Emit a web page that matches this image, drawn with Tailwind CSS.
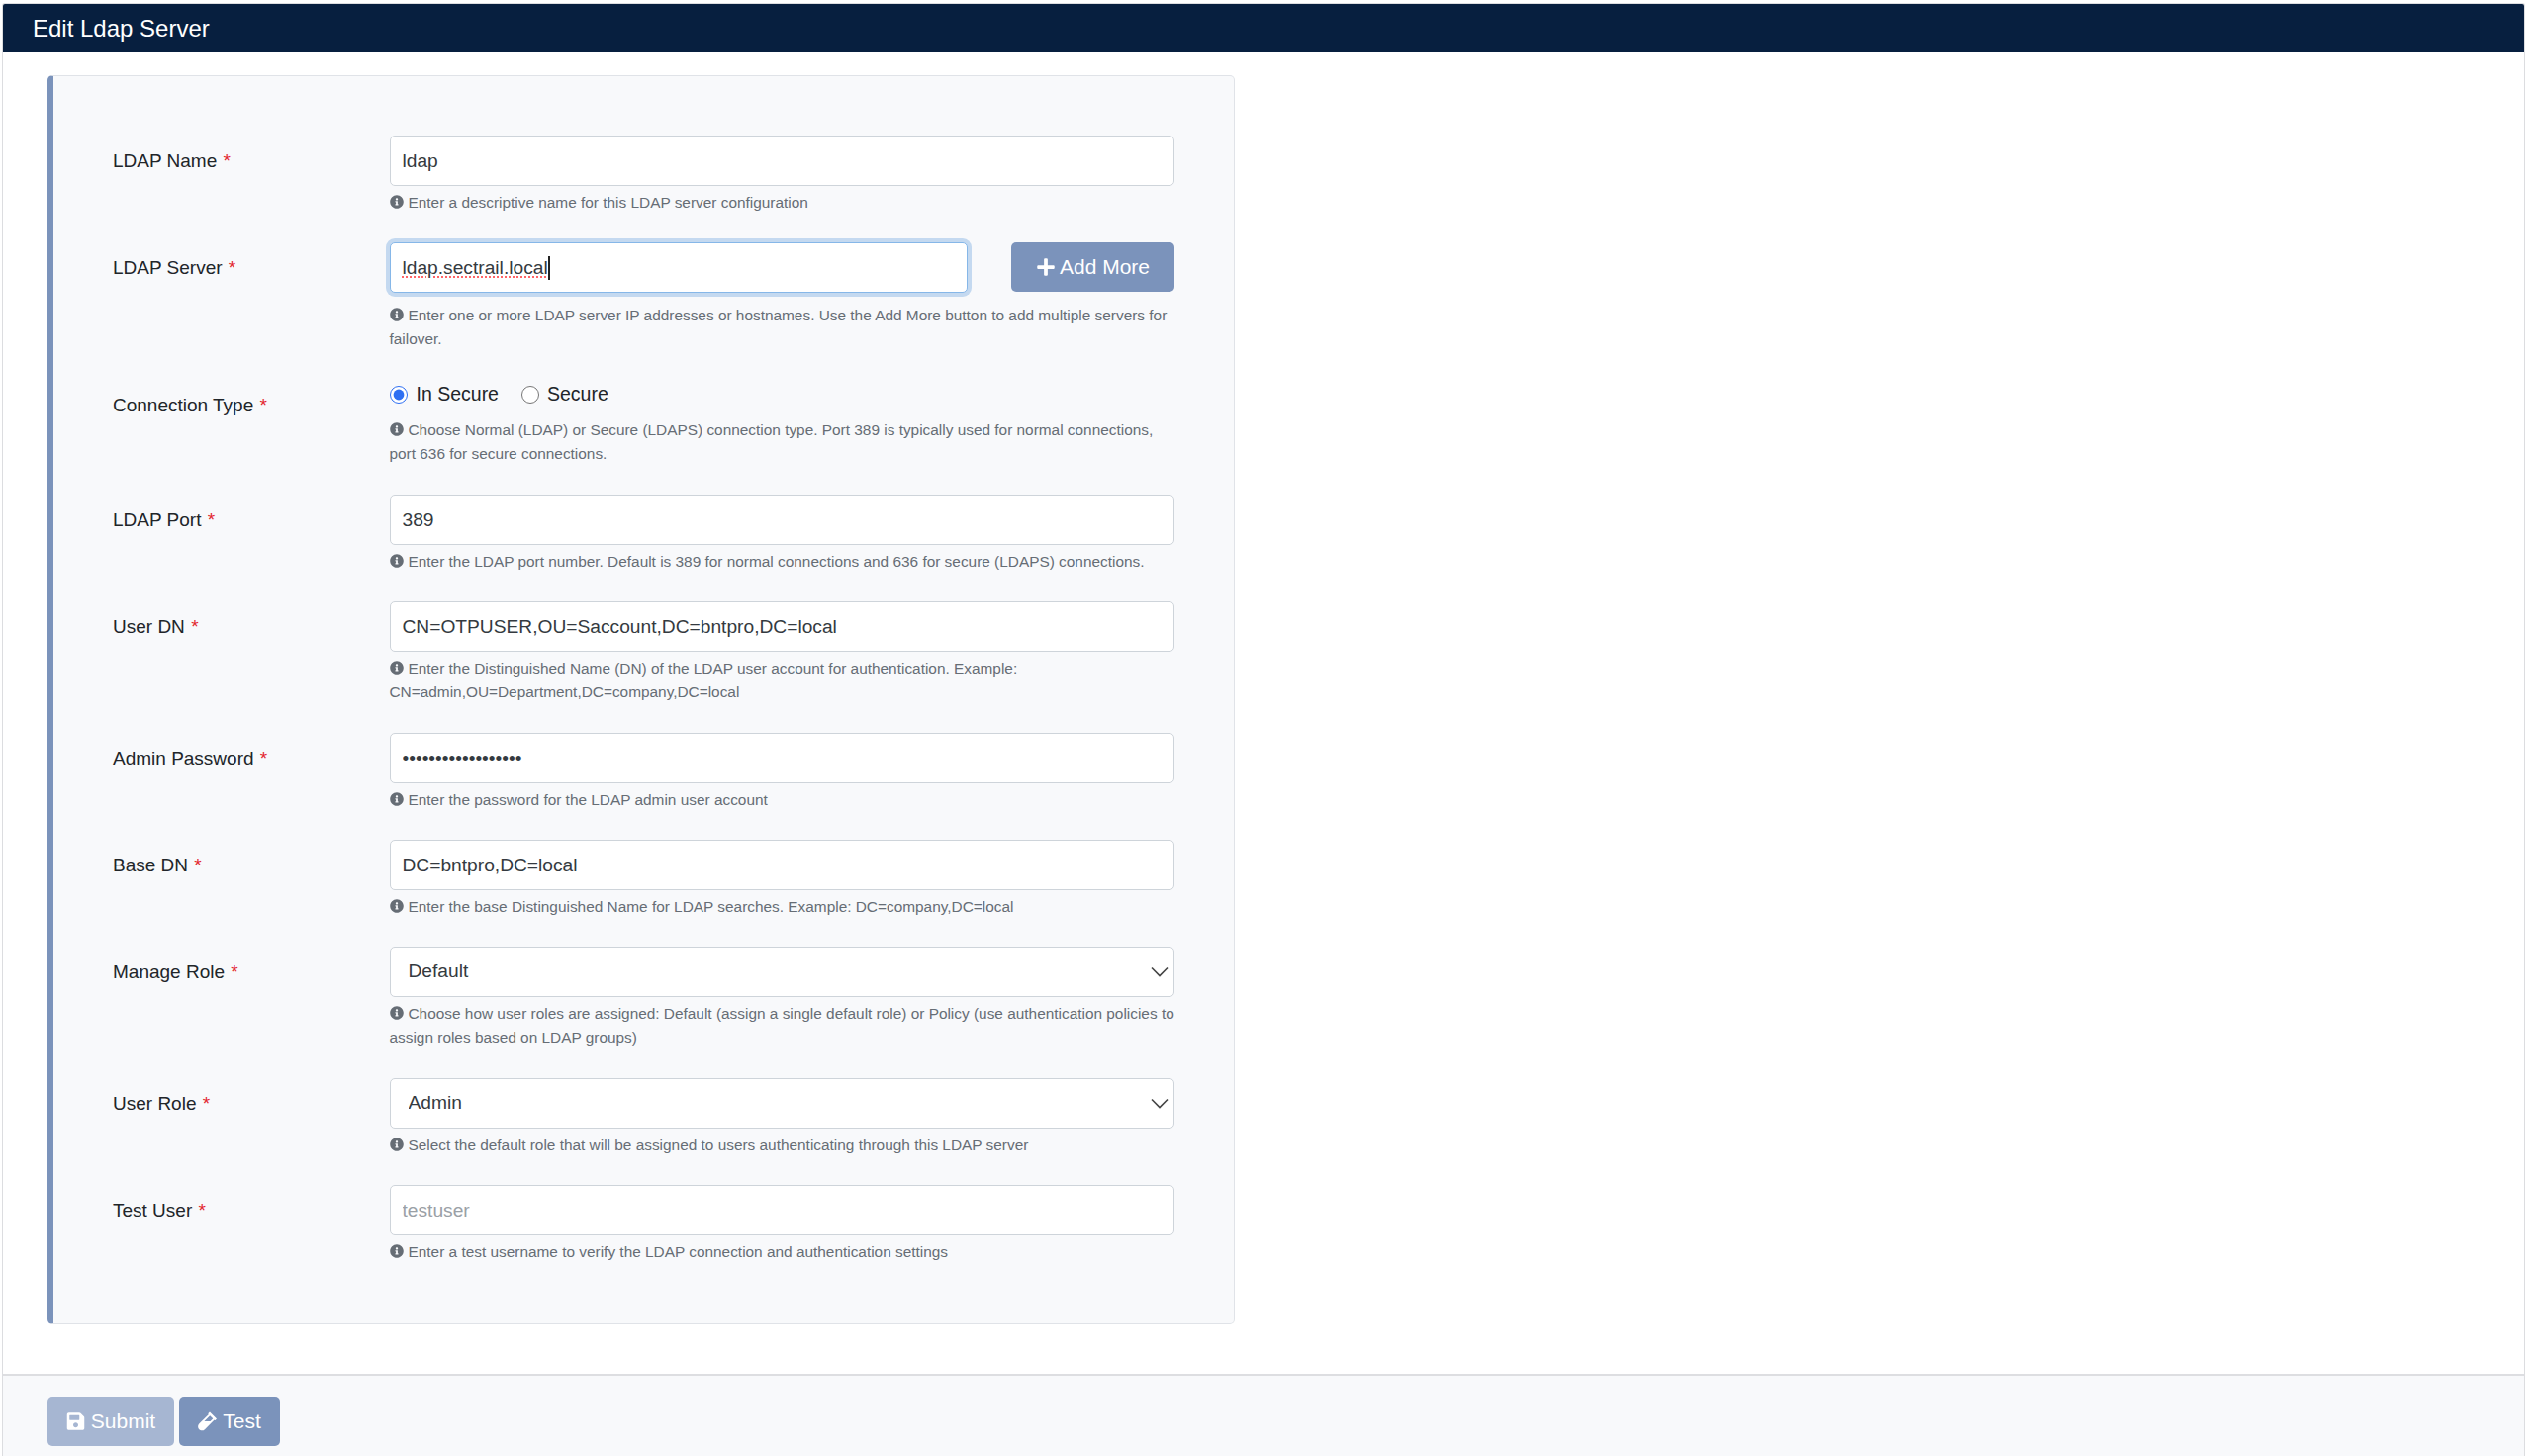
<!DOCTYPE html>
<html lang="en">
<head>
  <meta charset="UTF-8">
  <title>Edit Ldap Server</title>
  <script src="https://cdn.jsdelivr.net/npm/@tailwindcss/browser@4"></script>
</head>
<body class="h-screen overflow-hidden bg-white font-['Liberation_Sans',Arial,sans-serif] text-[#212529]">
  <div class="mx-[2px] mt-[3px] h-[1469px] overflow-hidden rounded-t-[3px] border border-b-0 border-[#dcdde0]">
    <div class="flex h-[49px] items-center bg-[#071f3f] pl-[30px] text-[24px] text-white">Edit Ldap Server</div>

    <div class="h-[1336px] pl-[45px] pt-[23px]">
      <div class="h-[1263px] w-[1200px] rounded-[5px] border border-l-[6px] border-[#e0e3e8] border-l-[#7b93bb] bg-[#f8f9fb] pl-[60px] pr-[60px] pt-[60px]">

        <div class="flex">
          <label class="w-[279.5px] shrink-0 pt-[11px] text-[19px] leading-[29px]">LDAP Name <span class="ml-[1px] text-[#e3262e]">*</span></label>
          <div class="w-[793.5px] pb-[28px]">
            <input value="ldap" class="h-[51px] w-full rounded-[5px] border border-[#ced4da] bg-white px-[12px] text-[19.2px] text-[#343a40]">
            <p class="mt-[5px] text-[15.4px] leading-[24px] text-[#666d75]"><svg class="mr-[5px] inline-block h-[14px] w-[14px] align-[-1px]" viewBox="0 0 512 512" fill="currentColor"><path d="M256 8C119 8 8 119.1 8 256c0 137 111 248 248 248s248-111 248-248C504 119.1 393 8 256 8zm0 110c23.2 0 42 18.8 42 42s-18.8 42-42 42-42-18.8-42-42 18.8-42 42-42zm56 254c0 6.6-5.4 12-12 12h-88c-6.6 0-12-5.4-12-12v-24c0-6.6 5.4-12 12-12h12v-64h-12c-6.6 0-12-5.4-12-12v-24c0-6.6 5.4-12 12-12h64c6.6 0 12 5.4 12 12v100h12c6.6 0 12 5.4 12 12v24z"/></svg>Enter a descriptive name for this LDAP server configuration</p>
          </div>
        </div>

        <div class="flex">
          <label class="w-[279.5px] shrink-0 pt-[11px] text-[19px] leading-[29px]">LDAP Server <span class="ml-[1px] text-[#e3262e]">*</span></label>
          <div class="w-[793.5px] pb-[22px]">
            <div class="flex items-start justify-between">
              <div class="flex h-[51px] w-[584px] items-center rounded-[5px] border border-[#86b7e8] bg-white px-[12px] text-[19.2px] text-[#343a40] shadow-[0_0_0_4px_#c4d9f0]"><span class="border-r-2 border-[#222] leading-[24px] underline decoration-red-400 decoration-dotted decoration-[2px] underline-offset-[3px]">ldap.sectrail.local</span></div>
              <button class="flex h-[50px] w-[165px] items-center justify-center gap-[4px] rounded-[5px] bg-[#7b93bb] text-[21px] text-white"><svg class="h-[20px] w-[20px]" viewBox="0 0 448 512" fill="currentColor"><path d="M416 208H272V64c0-17.67-14.33-32-32-32h-32c-17.67 0-32 14.33-32 32v144H32c-17.67 0-32 14.33-32 32v32c0 17.67 14.33 32 32 32h144v144c0 17.67 14.33 32 32 32h32c17.67 0 32-14.33 32-32V304h144c17.67 0 32-14.33 32-32v-32c0-17.67-14.33-32-32-32z"/></svg>Add More</button>
            </div>
            <p class="mt-[11px] text-[15.4px] leading-[24px] text-[#666d75]"><svg class="mr-[5px] inline-block h-[14px] w-[14px] align-[-1px]" viewBox="0 0 512 512" fill="currentColor"><path d="M256 8C119 8 8 119.1 8 256c0 137 111 248 248 248s248-111 248-248C504 119.1 393 8 256 8zm0 110c23.2 0 42 18.8 42 42s-18.8 42-42 42-42-18.8-42-42 18.8-42 42-42zm56 254c0 6.6-5.4 12-12 12h-88c-6.6 0-12-5.4-12-12v-24c0-6.6 5.4-12 12-12h12v-64h-12c-6.6 0-12-5.4-12-12v-24c0-6.6 5.4-12 12-12h64c6.6 0 12 5.4 12 12v100h12c6.6 0 12 5.4 12 12v24z"/></svg>Enter one or more LDAP server IP addresses or hostnames. Use the Add More button to add multiple servers for failover.</p>
          </div>
        </div>

        <div class="flex">
          <label class="w-[279.5px] shrink-0 pt-[18px] text-[19px] leading-[29px]">Connection Type <span class="ml-[1px] text-[#e3262e]">*</span></label>
          <div class="w-[793.5px] pb-[29px]">
            <div class="flex h-[41px] items-center pt-[3px] text-[19.5px]">
              <input type="radio" name="conn" checked class="h-[18px] w-[18px] accent-[#2e6ff2]"><span class="ml-[9px]">In Secure</span>
              <input type="radio" name="conn" class="ml-[23px] h-[18px] w-[18px]"><span class="ml-[8px]">Secure</span>
            </div>
            <p class="mt-[5px] text-[15.4px] leading-[24px] text-[#666d75]"><svg class="mr-[5px] inline-block h-[14px] w-[14px] align-[-1px]" viewBox="0 0 512 512" fill="currentColor"><path d="M256 8C119 8 8 119.1 8 256c0 137 111 248 248 248s248-111 248-248C504 119.1 393 8 256 8zm0 110c23.2 0 42 18.8 42 42s-18.8 42-42 42-42-18.8-42-42 18.8-42 42-42zm56 254c0 6.6-5.4 12-12 12h-88c-6.6 0-12-5.4-12-12v-24c0-6.6 5.4-12 12-12h12v-64h-12c-6.6 0-12-5.4-12-12v-24c0-6.6 5.4-12 12-12h64c6.6 0 12 5.4 12 12v100h12c6.6 0 12 5.4 12 12v24z"/></svg>Choose Normal (LDAP) or Secure (LDAPS) connection type. Port 389 is typically used for normal connections, port 636 for secure connections.</p>
          </div>
        </div>

        <div class="flex">
          <label class="w-[279.5px] shrink-0 pt-[11px] text-[19px] leading-[29px]">LDAP Port <span class="ml-[1px] text-[#e3262e]">*</span></label>
          <div class="w-[793.5px] pb-[28px]">
            <input value="389" class="h-[51px] w-full rounded-[5px] border border-[#ced4da] bg-white px-[12px] text-[19.2px] text-[#343a40]">
            <p class="mt-[5px] text-[15.4px] leading-[24px] text-[#666d75]"><svg class="mr-[5px] inline-block h-[14px] w-[14px] align-[-1px]" viewBox="0 0 512 512" fill="currentColor"><path d="M256 8C119 8 8 119.1 8 256c0 137 111 248 248 248s248-111 248-248C504 119.1 393 8 256 8zm0 110c23.2 0 42 18.8 42 42s-18.8 42-42 42-42-18.8-42-42 18.8-42 42-42zm56 254c0 6.6-5.4 12-12 12h-88c-6.6 0-12-5.4-12-12v-24c0-6.6 5.4-12 12-12h12v-64h-12c-6.6 0-12-5.4-12-12v-24c0-6.6 5.4-12 12-12h64c6.6 0 12 5.4 12 12v100h12c6.6 0 12 5.4 12 12v24z"/></svg>Enter the LDAP port number. Default is 389 for normal connections and 636 for secure (LDAPS) connections.</p>
          </div>
        </div>

        <div class="flex">
          <label class="w-[279.5px] shrink-0 pt-[11px] text-[19px] leading-[29px]">User DN <span class="ml-[1px] text-[#e3262e]">*</span></label>
          <div class="w-[793.5px] pb-[29px]">
            <input value="CN=OTPUSER,OU=Saccount,DC=bntpro,DC=local" class="h-[51px] w-full rounded-[5px] border border-[#ced4da] bg-white px-[12px] text-[19.2px] text-[#343a40]">
            <p class="mt-[5px] text-[15.4px] leading-[24px] text-[#666d75]"><svg class="mr-[5px] inline-block h-[14px] w-[14px] align-[-1px]" viewBox="0 0 512 512" fill="currentColor"><path d="M256 8C119 8 8 119.1 8 256c0 137 111 248 248 248s248-111 248-248C504 119.1 393 8 256 8zm0 110c23.2 0 42 18.8 42 42s-18.8 42-42 42-42-18.8-42-42 18.8-42 42-42zm56 254c0 6.6-5.4 12-12 12h-88c-6.6 0-12-5.4-12-12v-24c0-6.6 5.4-12 12-12h12v-64h-12c-6.6 0-12-5.4-12-12v-24c0-6.6 5.4-12 12-12h64c6.6 0 12 5.4 12 12v100h12c6.6 0 12 5.4 12 12v24z"/></svg>Enter the Distinguished Name (DN) of the LDAP user account for authentication. Example: CN=admin,OU=Department,DC=company,DC=local</p>
          </div>
        </div>

        <div class="flex">
          <label class="w-[279.5px] shrink-0 pt-[11px] text-[19px] leading-[29px]">Admin Password <span class="ml-[1px] text-[#e3262e]">*</span></label>
          <div class="w-[793.5px] pb-[28px]">
            <input type="password" value="aaaaaaaaaaaaaaaaaa" class="h-[51px] w-full rounded-[5px] border border-[#ced4da] bg-white px-[12px] text-[19.2px] text-[#343a40]">
            <p class="mt-[5px] text-[15.4px] leading-[24px] text-[#666d75]"><svg class="mr-[5px] inline-block h-[14px] w-[14px] align-[-1px]" viewBox="0 0 512 512" fill="currentColor"><path d="M256 8C119 8 8 119.1 8 256c0 137 111 248 248 248s248-111 248-248C504 119.1 393 8 256 8zm0 110c23.2 0 42 18.8 42 42s-18.8 42-42 42-42-18.8-42-42 18.8-42 42-42zm56 254c0 6.6-5.4 12-12 12h-88c-6.6 0-12-5.4-12-12v-24c0-6.6 5.4-12 12-12h12v-64h-12c-6.6 0-12-5.4-12-12v-24c0-6.6 5.4-12 12-12h64c6.6 0 12 5.4 12 12v100h12c6.6 0 12 5.4 12 12v24z"/></svg>Enter the password for the LDAP admin user account</p>
          </div>
        </div>

        <div class="flex">
          <label class="w-[279.5px] shrink-0 pt-[11px] text-[19px] leading-[29px]">Base DN <span class="ml-[1px] text-[#e3262e]">*</span></label>
          <div class="w-[793.5px] pb-[28px]">
            <input value="DC=bntpro,DC=local" class="h-[51px] w-full rounded-[5px] border border-[#ced4da] bg-white px-[12px] text-[19.2px] text-[#343a40]">
            <p class="mt-[5px] text-[15.4px] leading-[24px] text-[#666d75]"><svg class="mr-[5px] inline-block h-[14px] w-[14px] align-[-1px]" viewBox="0 0 512 512" fill="currentColor"><path d="M256 8C119 8 8 119.1 8 256c0 137 111 248 248 248s248-111 248-248C504 119.1 393 8 256 8zm0 110c23.2 0 42 18.8 42 42s-18.8 42-42 42-42-18.8-42-42 18.8-42 42-42zm56 254c0 6.6-5.4 12-12 12h-88c-6.6 0-12-5.4-12-12v-24c0-6.6 5.4-12 12-12h12v-64h-12c-6.6 0-12-5.4-12-12v-24c0-6.6 5.4-12 12-12h64c6.6 0 12 5.4 12 12v100h12c6.6 0 12 5.4 12 12v24z"/></svg>Enter the base Distinguished Name for LDAP searches. Example: DC=company,DC=local</p>
          </div>
        </div>

        <div class="flex">
          <label class="w-[279.5px] shrink-0 pt-[11px] text-[19px] leading-[29px]">Manage Role <span class="ml-[1px] text-[#e3262e]">*</span></label>
          <div class="w-[793.5px] pb-[29px]">
            <div class="relative">
              <select class="h-[51px] w-full appearance-none rounded-[5px] border border-[#ced4da] bg-white px-[18px] text-[19.2px] text-[#343a40]"><option>Default</option></select>
              <svg class="absolute right-[6px] top-[20px] h-[11px] w-[18px] text-[#444]" viewBox="0 0 18 11" fill="none" stroke="currentColor" stroke-width="1.6"><path d="M1 1.5l8 8 8-8"/></svg>
            </div>
            <p class="mt-[5px] text-[15.4px] leading-[24px] text-[#666d75]"><svg class="mr-[5px] inline-block h-[14px] w-[14px] align-[-1px]" viewBox="0 0 512 512" fill="currentColor"><path d="M256 8C119 8 8 119.1 8 256c0 137 111 248 248 248s248-111 248-248C504 119.1 393 8 256 8zm0 110c23.2 0 42 18.8 42 42s-18.8 42-42 42-42-18.8-42-42 18.8-42 42-42zm56 254c0 6.6-5.4 12-12 12h-88c-6.6 0-12-5.4-12-12v-24c0-6.6 5.4-12 12-12h12v-64h-12c-6.6 0-12-5.4-12-12v-24c0-6.6 5.4-12 12-12h64c6.6 0 12 5.4 12 12v100h12c6.6 0 12 5.4 12 12v24z"/></svg>Choose how user roles are assigned: Default (assign a single default role) or Policy (use authentication policies to assign roles based on LDAP groups)</p>
          </div>
        </div>

        <div class="flex">
          <label class="w-[279.5px] shrink-0 pt-[11px] text-[19px] leading-[29px]">User Role <span class="ml-[1px] text-[#e3262e]">*</span></label>
          <div class="w-[793.5px] pb-[28px]">
            <div class="relative">
              <select class="h-[51px] w-full appearance-none rounded-[5px] border border-[#ced4da] bg-white px-[18px] text-[19.2px] text-[#343a40]"><option>Admin</option></select>
              <svg class="absolute right-[6px] top-[20px] h-[11px] w-[18px] text-[#444]" viewBox="0 0 18 11" fill="none" stroke="currentColor" stroke-width="1.6"><path d="M1 1.5l8 8 8-8"/></svg>
            </div>
            <p class="mt-[5px] text-[15.4px] leading-[24px] text-[#666d75]"><svg class="mr-[5px] inline-block h-[14px] w-[14px] align-[-1px]" viewBox="0 0 512 512" fill="currentColor"><path d="M256 8C119 8 8 119.1 8 256c0 137 111 248 248 248s248-111 248-248C504 119.1 393 8 256 8zm0 110c23.2 0 42 18.8 42 42s-18.8 42-42 42-42-18.8-42-42 18.8-42 42-42zm56 254c0 6.6-5.4 12-12 12h-88c-6.6 0-12-5.4-12-12v-24c0-6.6 5.4-12 12-12h12v-64h-12c-6.6 0-12-5.4-12-12v-24c0-6.6 5.4-12 12-12h64c6.6 0 12 5.4 12 12v100h12c6.6 0 12 5.4 12 12v24z"/></svg>Select the default role that will be assigned to users authenticating through this LDAP server</p>
          </div>
        </div>

        <div class="flex">
          <label class="w-[279.5px] shrink-0 pt-[11px] text-[19px] leading-[29px]">Test User <span class="ml-[1px] text-[#e3262e]">*</span></label>
          <div class="w-[793.5px]">
            <input placeholder="testuser" class="h-[51px] w-full rounded-[5px] border border-[#ced4da] bg-white px-[12px] text-[19.2px] text-[#343a40] placeholder:text-[#9aa0a6]">
            <p class="mt-[5px] text-[15.4px] leading-[24px] text-[#666d75]"><svg class="mr-[5px] inline-block h-[14px] w-[14px] align-[-1px]" viewBox="0 0 512 512" fill="currentColor"><path d="M256 8C119 8 8 119.1 8 256c0 137 111 248 248 248s248-111 248-248C504 119.1 393 8 256 8zm0 110c23.2 0 42 18.8 42 42s-18.8 42-42 42-42-18.8-42-42 18.8-42 42-42zm56 254c0 6.6-5.4 12-12 12h-88c-6.6 0-12-5.4-12-12v-24c0-6.6 5.4-12 12-12h12v-64h-12c-6.6 0-12-5.4-12-12v-24c0-6.6 5.4-12 12-12h64c6.6 0 12 5.4 12 12v100h12c6.6 0 12 5.4 12 12v24z"/></svg>Enter a test username to verify the LDAP connection and authentication settings</p>
          </div>
        </div>
      </div>
    </div>

    <div class="flex h-[90px] items-start gap-[5px] border-t-2 border-[#dddee1] bg-[#f8f9fb] pl-[45px] pt-[21px]">
      <button class="flex h-[50px] w-[128px] items-center justify-center gap-[6px] rounded-[5px] bg-[#a6b6d2] text-[21px] text-white"><svg class="h-[20px] w-[19px]" viewBox="0 0 448 512" fill="currentColor"><path d="M433.941 129.941l-83.882-83.882A48 48 0 0 0 316.118 32H48C21.49 32 0 53.49 0 80v352c0 26.51 21.49 48 48 48h352c26.51 0 48-21.49 48-48V163.882a48 48 0 0 0-14.059-33.941zM224 416c-35.346 0-64-28.654-64-64 0-35.346 28.654-64 64-64s64 28.654 64 64c0 35.346-28.654 64-64 64zm96-304.52V212c0 6.627-5.373 12-12 12H76c-6.627 0-12-5.373-12-12V108c0-6.627 5.373-12 12-12h228.52c3.183 0 6.235 1.264 8.485 3.515l3.48 3.48A11.996 11.996 0 0 1 320 111.48z"/></svg>Submit</button>
      <button class="flex h-[50px] w-[102px] items-center justify-center gap-[6px] rounded-[5px] bg-[#7b93bb] text-[21px] text-white"><svg class="h-[20px] w-[19px]" viewBox="0 0 480 512" fill="currentColor"><path d="M477.7 186.1L309.5 18.3c-3.1-3.1-8.2-3.1-11.3 0l-34 33.9c-3.1 3.1-3.1 8.2 0 11.3l11.2 11.1L33 316.5c-38.8 38.7-45.1 102-9.4 143.5 20.6 24 49.5 36 78.4 35.9 26.4 0 52.8-10 72.9-30.1l246.3-245.7 11.2 11.1c3.1 3.1 8.2 3.1 11.3 0l34-33.9c3.1-3 3.1-8.1 0-11.2zM318 256H161l148-147.7 78.5 78.3L318 256z"/></svg>Test</button>
    </div>
  </div>
</body>
</html>
